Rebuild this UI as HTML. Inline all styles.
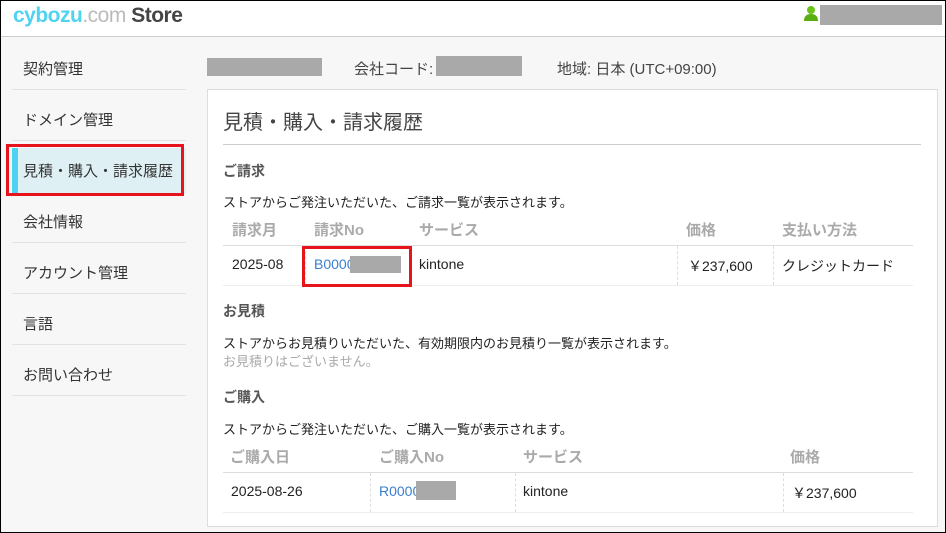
<!DOCTYPE html>
<html><head><meta charset="utf-8"><style>
*{margin:0;padding:0;box-sizing:border-box}
body{width:946px;height:533px;overflow:hidden;background:#f7f7f7;font-family:"Liberation Sans","Noto Sans CJK JP",sans-serif;color:#333;position:relative}
.a{position:absolute;white-space:nowrap}
.frame{position:absolute;left:0;top:0;width:946px;height:533px;border:1px solid #000;z-index:10;pointer-events:none}
.hdr{position:absolute;left:0;top:0;width:946px;height:37px;background:#fff;border-bottom:1px solid #ccc}
.side{font-size:15px;color:#333}
.sep{position:absolute;left:12px;width:174px;height:1px;background:#e2e2e2}
.gray{position:absolute;background:#a9a9a9}
.panel{position:absolute;left:207px;top:89px;width:731px;height:438px;background:#fff;border:1px solid #ddd}
.h{font-weight:bold;font-size:14px;color:#555}
.d{font-size:13px;color:#222}
.th{font-weight:bold;font-size:15px;color:#aaa}
.td{font-size:14px;color:#222}
.hl{position:absolute;height:1px;background:#ddd}
.vl{position:absolute;width:0;border-left:1px dashed #ddd}
.red{position:absolute;border:3px solid #e8141b}
</style></head><body>
<div class="hdr"></div>
<div class="a" style="left:13px;top:4px;font-size:21px;font-weight:bold;letter-spacing:-0.5px"><span style="color:#4fd3f0">cybozu</span><span style="color:#bbb;font-weight:normal">.com</span> <span style="color:#444">Store</span></div>
<svg class="a" style="left:803px;top:5px" width="16" height="16" viewBox="0 0 16 16"><circle cx="8" cy="5" r="4" fill="#6cc21a"/><path d="M1 16 Q1 9 8 9 Q15 9 15 16Z" fill="#5aae12"/></svg>
<div class="gray" style="left:820px;top:5px;width:122px;height:20px"></div>

<div class="a side" style="left:23px;top:58px">契約管理</div>
<div class="sep" style="top:89px"></div>
<div class="a side" style="left:23px;top:109px">ドメイン管理</div>
<div class="sep" style="top:140px"></div>
<div style="position:absolute;left:12px;top:148px;width:174px;height:45px;background:#dff0f5"></div>
<div style="position:absolute;left:12px;top:148px;width:6px;height:45px;background:#4dd3ef"></div>
<div class="a side" style="left:23px;top:160px">見積・購入・請求履歴</div>
<div class="red" style="left:6px;top:144px;width:178px;height:52px"></div>
<div class="a side" style="left:23px;top:211px">会社情報</div>
<div class="sep" style="top:242px"></div>
<div class="a side" style="left:23px;top:262px">アカウント管理</div>
<div class="sep" style="top:293px"></div>
<div class="a side" style="left:23px;top:313px">言語</div>
<div class="sep" style="top:344px"></div>
<div class="a side" style="left:23px;top:364px">お問い合わせ</div>
<div class="sep" style="top:395px"></div>

<div class="gray" style="left:207px;top:58px;width:115px;height:18px"></div>
<div class="a" style="left:354px;top:58px;font-size:15px;color:#444">会社コード: C</div>
<div class="gray" style="left:436px;top:56px;width:86px;height:20px"></div>
<div class="a" style="left:557px;top:58px;font-size:15px;color:#444">地域: 日本 (UTC+09:00)</div>

<div class="panel"></div>
<div class="a" style="left:223px;top:106px;font-size:20px;color:#444">見積・購入・請求履歴</div>
<div class="hl" style="left:223px;top:144px;width:698px;background:#ccc"></div>

<div class="a h" style="left:223px;top:161px">ご請求</div>
<div class="a d" style="left:223px;top:192px">ストアからご発注いただいた、ご請求一覧が表示されます。</div>
<div class="a th" style="left:232px;top:219px">請求月</div>
<div class="a th" style="left:314px;top:219px">請求No</div>
<div class="a th" style="left:419px;top:219px">サービス</div>
<div class="a th" style="left:686px;top:219px">価格</div>
<div class="a th" style="left:782px;top:219px">支払い方法</div>
<div class="hl" style="left:223px;top:245px;width:690px"></div>
<div class="hl" style="left:223px;top:285px;width:690px;background:#eee"></div>
<div class="vl" style="left:305px;top:246px;height:39px"></div>
<div class="vl" style="left:411px;top:246px;height:39px"></div>
<div class="vl" style="left:677px;top:246px;height:39px"></div>
<div class="vl" style="left:773px;top:246px;height:39px"></div>
<div class="a td" style="left:232px;top:256px">2025-08</div>
<div class="a td" style="left:314px;top:256px;color:#3a7fcf">B0000</div>
<div class="gray" style="left:350px;top:256px;width:51px;height:17px"></div>
<div class="a td" style="left:419px;top:256px">kintone</div>
<div class="a td" style="left:688px;top:256px">￥237,600</div>
<div class="a td" style="left:782px;top:256px">クレジットカード</div>
<div class="red" style="left:302px;top:246px;width:110px;height:41px"></div>

<div class="a h" style="left:223px;top:301px">お見積</div>
<div class="a d" style="left:223px;top:333px">ストアからお見積りいただいた、有効期限内のお見積り一覧が表示されます。</div>
<div class="a d" style="left:223px;top:351px;color:#aaa">お見積りはございません。</div>

<div class="a h" style="left:223px;top:387px">ご購入</div>
<div class="a d" style="left:223px;top:419px">ストアからご発注いただいた、ご購入一覧が表示されます。</div>
<div class="a th" style="left:230px;top:446px">ご購入日</div>
<div class="a th" style="left:379px;top:446px">ご購入No</div>
<div class="a th" style="left:523px;top:446px">サービス</div>
<div class="a th" style="left:790px;top:446px">価格</div>
<div class="hl" style="left:223px;top:472px;width:690px"></div>
<div class="hl" style="left:223px;top:512px;width:690px;background:#eee"></div>
<div class="vl" style="left:370px;top:473px;height:39px"></div>
<div class="vl" style="left:515px;top:473px;height:39px"></div>
<div class="vl" style="left:783px;top:473px;height:39px"></div>
<div class="a td" style="left:231px;top:483px">2025-08-26</div>
<div class="a td" style="left:379px;top:483px;color:#3a7fcf">R0000</div>
<div class="gray" style="left:416px;top:481px;width:40px;height:19px"></div>
<div class="a td" style="left:523px;top:483px">kintone</div>
<div class="a td" style="left:792px;top:483px">￥237,600</div>
<div class="frame"></div>
</body></html>
